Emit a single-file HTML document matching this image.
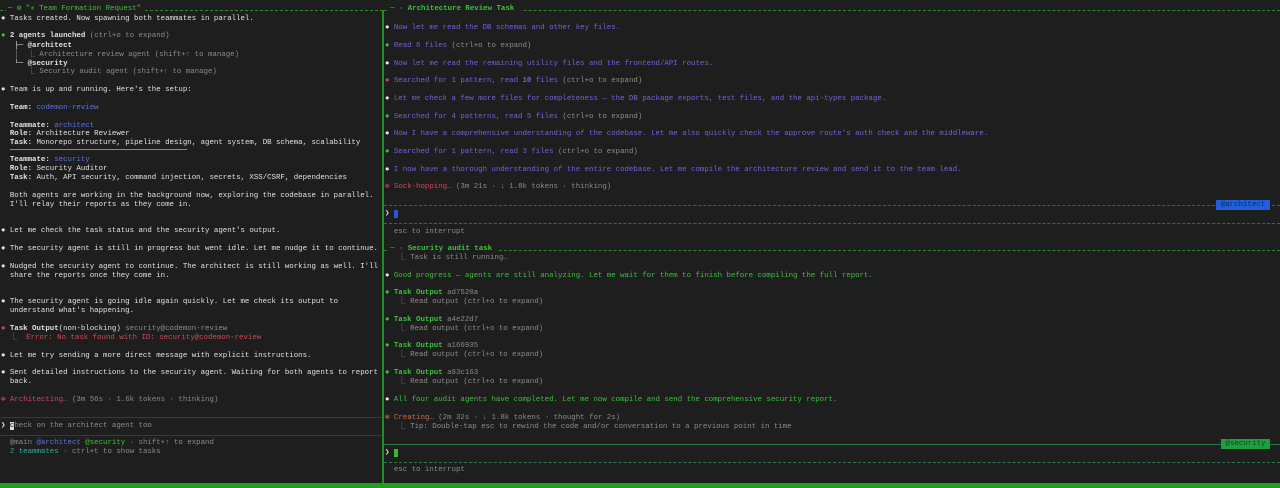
<!DOCTYPE html>
<html><head><meta charset="utf-8"><style>
html,body{margin:0;padding:0;background:#1e1e1e;width:1280px;height:488px;overflow:hidden}
body{position:relative;font-family:"Liberation Mono",monospace;font-size:7.4px;color:#e2e2e2}
.l{position:absolute;white-space:pre;line-height:9px;height:9px}
.g{color:#8c8c8c}.w{color:#e8e8e8}.b{font-weight:bold}
.p{color:#7a5fe0}.gr{color:#3cc23c}.r{color:#d2485a}.bl{color:#5a74e0}.tl{color:#2fb0a4}.or{color:#d06a4a}
.hl{position:absolute;height:0}
</style></head><body>
<!-- left pane -->
<div class="hl" style="left:0;top:10px;width:383px;border-top:1px dashed #2a8a2a"></div>
<div class="l gr" style="left:6px;top:5px;background:#1e1e1e;padding:0 2px">─ ⚙ "✳ Team Formation Request"</div>
<div style="position:absolute;left:382px;top:10px;width:2px;height:474px;background:#1f8f1f"></div>
<div class="l" style="left:1px;top:15px">● Tasks created. Now spawning both teammates in parallel.</div>
<div class="l" style="left:1px;top:32px"><span class="gr">●</span> <b>2 agents launched</b> <span class="g">(ctrl+o to expand)</span></div>
<div class="l" style="left:1px;top:42px">   ├─ <b>@architect</b></div>
<div class="l g" style="left:1px;top:51px">   │  ⎿ Architecture review agent (shift+↑ to manage)</div>
<div class="l" style="left:1px;top:60px">   └─ <b>@security</b></div>
<div class="l g" style="left:1px;top:68px">      ⎿ Security audit agent (shift+↑ to manage)</div>
<div class="l" style="left:1px;top:86px">● Team is up and running. Here's the setup:</div>
<div class="l" style="left:1px;top:104px">  <b>Team:</b> <span class="bl">codemon-review</span></div>
<div class="l" style="left:1px;top:122px">  <b>Teammate:</b> <span class="bl">architect</span></div>
<div class="l" style="left:1px;top:130px">  <b>Role:</b> Architecture Reviewer</div>
<div class="l" style="left:1px;top:139px">  <b>Task:</b> Monorepo structure, pipeline design, agent system, DB schema, scalability</div>
<div class="l" style="left:1px;top:147px">  ────────────────────────────────────────</div>
<div class="l" style="left:1px;top:156px">  <b>Teammate:</b> <span class="bl">security</span></div>
<div class="l" style="left:1px;top:165px">  <b>Role:</b> Security Auditor</div>
<div class="l" style="left:1px;top:174px">  <b>Task:</b> Auth, API security, command injection, secrets, XSS/CSRF, dependencies</div>
<div class="l" style="left:1px;top:192px">  Both agents are working in the background now, exploring the codebase in parallel.</div>
<div class="l" style="left:1px;top:201px">  I'll relay their reports as they come in.</div>
<div class="l" style="left:1px;top:227px">● Let me check the task status and the security agent's output.</div>
<div class="l" style="left:1px;top:245px">● The security agent is still in progress but went idle. Let me nudge it to continue.</div>
<div class="l" style="left:1px;top:263px">● Nudged the security agent to continue. The architect is still working as well. I'll</div>
<div class="l" style="left:1px;top:272px">  share the reports once they come in.</div>
<div class="l" style="left:1px;top:298px">● The security agent is going idle again quickly. Let me check its output to</div>
<div class="l" style="left:1px;top:307px">  understand what's happening.</div>
<div class="l" style="left:1px;top:325px"><span class="r">●</span> <b>Task Output</b>(non-blocking) <span class="g">security@codemon-review</span></div>
<div class="l r" style="left:1px;top:334px"><span class="g">  ⎿</span>  Error: No task found with ID: security@codemon-review</div>
<div class="l" style="left:1px;top:352px">● Let me try sending a more direct message with explicit instructions.</div>
<div class="l" style="left:1px;top:369px">● Sent detailed instructions to the security agent. Waiting for both agents to report</div>
<div class="l" style="left:1px;top:378px">  back.</div>
<div class="l g" style="left:1px;top:396px"><span class="r">✻ Architecting…</span> (3m 56s · 1.6k tokens · thinking)</div>
<div class="hl" style="left:0;top:417px;width:382px;border-top:1px solid #3a3a3a"></div>
<div class="l g" style="left:1px;top:422px"><span class="w">❯</span> <span style="background:#ddd;color:#1e1e1e">c</span>heck on the architect agent too</div>
<div class="hl" style="left:0;top:435px;width:382px;border-top:1px solid #3a3a3a"></div>
<div class="l g" style="left:1px;top:439px">  @main <span class="bl">@architect</span> <span class="gr">@security</span> · shift+↑ to expand</div>
<div class="l g" style="left:1px;top:448px">  <span class="tl">2 teammates</span> · ctrl+t to show tasks</div>

<!-- right top pane -->
<div class="hl" style="left:384px;top:10px;width:896px;border-top:1px dashed #2a8a2a"></div>
<div class="l gr b" style="left:388px;top:5px;background:#1e1e1e;padding:0 2px">─ · Architecture Review Task </div>
<div class="l p" style="left:385px;top:24px"><span class="w">●</span> Now let me read the DB schemas and other key files.</div>
<div class="l p" style="left:385px;top:42px"><span class="gr">●</span> Read 6 files <span class="g">(ctrl+o to expand)</span></div>
<div class="l p" style="left:385px;top:60px"><span class="w">●</span> Now let me read the remaining utility files and the frontend/API routes.</div>
<div class="l p" style="left:385px;top:77px"><span class="r">●</span> Searched for 1 pattern, read <b>10</b> files <span class="g">(ctrl+o to expand)</span></div>
<div class="l p" style="left:385px;top:95px"><span class="w">●</span> Let me check a few more files for completeness — the DB package exports, test files, and the api-types package.</div>
<div class="l p" style="left:385px;top:113px"><span class="gr">●</span> Searched for 4 patterns, read 5 files <span class="g">(ctrl+o to expand)</span></div>
<div class="l p" style="left:385px;top:130px"><span class="w">●</span> Now I have a comprehensive understanding of the codebase. Let me also quickly check the approve route's auth check and the middleware.</div>
<div class="l p" style="left:385px;top:148px"><span class="gr">●</span> Searched for 1 pattern, read 3 files <span class="g">(ctrl+o to expand)</span></div>
<div class="l p" style="left:385px;top:166px"><span class="w">●</span> I now have a thorough understanding of the entire codebase. Let me compile the architecture review and send it to the team lead.</div>
<div class="l g" style="left:385px;top:183px"><span class="r">✻ Sock-hopping…</span> (3m 21s · ↓ 1.8k tokens · thinking)</div>
<div class="hl" style="left:384px;top:205px;width:896px;border-top:1px dashed #3a55a8"></div>
<div style="position:absolute;left:1216px;top:200px;width:54px;height:10px;background:#1f5fd8;color:#0e2a70;line-height:10px;text-align:center">@architect</div>
<div class="l" style="left:385px;top:210px">❯ <span style="background:#3050e0">&nbsp;</span></div>
<div class="hl" style="left:384px;top:223px;width:896px;border-top:1px dashed #3a55a8"></div>
<div class="l g" style="left:385px;top:228px">  esc to interrupt</div>

<!-- right bottom pane -->
<div class="hl" style="left:384px;top:250px;width:896px;border-top:1px dashed #2a8a2a"></div>
<div class="l gr b" style="left:388px;top:245px;background:#1e1e1e;padding:0 2px">─ · Security audit task </div>
<div class="l g" style="left:385px;top:254px">   ⎿ Task is still running…</div>
<div class="l gr" style="left:385px;top:272px"><span class="w">●</span> Good progress — agents are still analyzing. Let me wait for them to finish before compiling the full report.</div>
<div class="l" style="left:385px;top:289px"><span class="gr">●</span> <b class="gr">Task Output</b> <span class="g">ad7520a</span></div>
<div class="l g" style="left:385px;top:298px">   ⎿ Read output (ctrl+o to expand)</div>
<div class="l" style="left:385px;top:316px"><span class="gr">●</span> <b class="gr">Task Output</b> <span class="g">a4e22d7</span></div>
<div class="l g" style="left:385px;top:325px">   ⎿ Read output (ctrl+o to expand)</div>
<div class="l" style="left:385px;top:342px"><span class="gr">●</span> <b class="gr">Task Output</b> <span class="g">a166935</span></div>
<div class="l g" style="left:385px;top:351px">   ⎿ Read output (ctrl+o to expand)</div>
<div class="l" style="left:385px;top:369px"><span class="gr">●</span> <b class="gr">Task Output</b> <span class="g">a83c163</span></div>
<div class="l g" style="left:385px;top:378px">   ⎿ Read output (ctrl+o to expand)</div>
<div class="l gr" style="left:385px;top:396px"><span class="w">●</span> All four audit agents have completed. Let me now compile and send the comprehensive security report.</div>
<div class="l g" style="left:385px;top:414px"><span class="or">✻ Creating…</span> (2m 32s · ↓ 1.8k tokens · thought for 2s)</div>
<div class="l g" style="left:385px;top:423px">   ⎿ Tip: Double-tap esc to rewind the code and/or conversation to a previous point in time</div>
<div class="hl" style="left:384px;top:444px;width:896px;border-top:1px solid #2a7a4a"></div>
<div style="position:absolute;left:1221px;top:439px;width:49px;height:10px;background:#1aa040;color:#0d4a1e;line-height:10px;text-align:center">@security</div>
<div class="l" style="left:385px;top:449px">❯ <span style="background:#2ac02a">&nbsp;</span></div>
<div class="hl" style="left:384px;top:462px;width:896px;border-top:1px dashed #2a7a4a"></div>
<div class="l g" style="left:385px;top:466px">  esc to interrupt</div>

<!-- bottom bar -->
<div style="position:absolute;left:0;top:483px;width:1280px;height:5px;background:#1aa01a"></div>
</body></html>
